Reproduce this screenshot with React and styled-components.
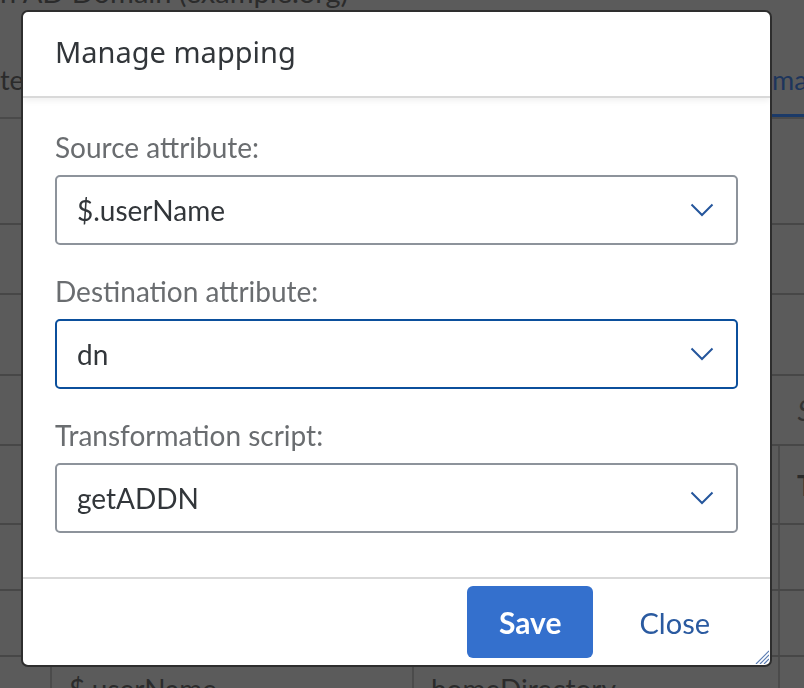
import React from 'react';
import styled, { createGlobalStyle } from 'styled-components';

const GlobalStyle = createGlobalStyle`
  html, body {
    margin: 0;
    padding: 0;
    width: 804px;
    height: 688px;
    overflow: hidden;
    background: #5b5b5b;
    font-family: Lato, "Noto Sans", sans-serif;
  }
  * { box-sizing: border-box; }
`;

/* dimmed page behind the dialog */
const Page = styled.div`
  width: 804px;
  height: 688px;
  overflow: hidden;
  color: #2b2b2b;
`;

const PageTitle = styled.div`
  font-size: 29px;
  line-height: 40px;
  margin-top: -28px;
  white-space: nowrap;
`;

const TabBar = styled.div`
  display: grid;
  grid-template-columns: 772px 1fr;
  height: 107px;
  border-bottom: 2px solid #4a4a4a;
`;

const Tab = styled.div`
  display: flex;
  align-items: center;
  padding-top: 32px;
  font-size: 27px;
  white-space: nowrap;
  overflow: hidden;
  color: ${p => (p.$active ? '#1d355c' : '#2b2b2b')};
  border-bottom: ${p => (p.$active ? '3px solid #1b3a68' : '3px solid transparent')};
`;

const Row = styled.div`
  height: ${p => p.$h}px;
  border-bottom: 2px solid #474747;
  display: flex;
  align-items: center;
  justify-content: flex-end;
`;

const Hint = styled.span`
  font-size: 28px;
  font-style: italic;
  color: #333;
  margin-right: -72px;
`;

const TableRow = styled.div`
  display: grid;
  grid-template-columns: 50px 362px 366px 1fr;
  height: ${p => p.$h}px;
  border-bottom: 2px solid #474747;
`;

const Cell = styled.div`
  display: flex;
  align-items: center;
  padding-left: 17px;
  font-size: 28px;
  white-space: nowrap;
  overflow: hidden;
  border-left: ${p => (p.$first ? 'none' : '2px solid #4b4b4b')};
  font-weight: ${p => (p.$head ? 700 : 400)};
`;

/* dialog */
const Overlay = styled.div`
  position: fixed;
  inset: 0;
  display: flex;
  align-items: flex-start;
  padding: 10px 0 0 21px;
`;

const Dialog = styled.div`
  position: relative;
  width: 751px;
  height: 657px;
  background: #fff;
  border: 2px solid #2e2e2e;
  border-radius: 7px;
  display: flex;
  flex-direction: column;
  overflow: hidden;
`;

const Header = styled.div`
  height: 86px;
  flex-shrink: 0;
  display: flex;
  align-items: center;
  padding: 0 0 6px 32px;
  border-bottom: 2px solid #d9d9d9;
  box-shadow: 0 3px 6px rgba(0, 0, 0, 0.06);
`;

const Title = styled.h1`
  margin: 0;
  font-family: "Noto Sans", Lato, sans-serif;
  font-weight: 400;
  font-size: 29px;
  color: #32363a;
`;

const Content = styled.div`
  flex: 1;
  padding: 31px 32px 0;
  display: flex;
  flex-direction: column;
  gap: 28px;
`;

const Field = styled.div`
  display: flex;
  flex-direction: column;
  gap: 10px;
`;

const Label = styled.label`
  height: 36px;
  line-height: 36px;
  font-size: 28px;
  color: #6a6d70;
`;

const Select = styled.div`
  height: 70px;
  display: flex;
  align-items: center;
  justify-content: space-between;
  padding: 0 22px 0 20px;
  border: 2px solid ${p => (p.$focused ? '#0b4f9c' : '#8d939b')};
  border-radius: 5px;
  font-size: 28px;
  color: #32363a;
`;

const Footer = styled.div`
  height: 88px;
  flex-shrink: 0;
  border-top: 2px solid #d9d9d9;
  display: flex;
  align-items: center;
  justify-content: flex-end;
  gap: 24px;
  padding-right: 38px;
`;

const Button = styled.button`
  height: 72px;
  border: none;
  border-radius: 6px;
  font-family: Lato, "Noto Sans", sans-serif;
  font-size: ${p => (p.$primary ? 30 : 29)}px;
  cursor: pointer;
  padding: ${p => (p.$primary ? '0 32px' : '0 22px')};
  background: ${p => (p.$primary ? '#3470cd' : 'transparent')};
  color: ${p => (p.$primary ? '#fff' : '#2a5aa0')};
  font-weight: ${p => (p.$primary ? 700 : 400)};
`;

const Grip = styled.svg`
  position: absolute;
  right: 1px;
  bottom: 1px;
`;

const Chevron = () => (
  <svg width="24" height="14" viewBox="0 0 24 14">
    <polyline points="1.5,1.5 12,12 22.5,1.5" fill="none" stroke="#25569c" strokeWidth="2" />
  </svg>
);

const fields = [
  { label: 'Source attribute:', value: '$.userName' },
  { label: 'Destination attribute:', value: 'dn', focused: true },
  { label: 'Transformation script:', value: 'getADDN' },
];

export default function App() {
  return (
    <>
      <GlobalStyle />
      <Page>
        <PageTitle>n AD Domain (example.org)</PageTitle>
        <TabBar>
          <Tab>te</Tab>
          <Tab $active>mapping</Tab>
        </TabBar>
        <Row $h={106} />
        <Row $h={70} />
        <Row $h={81} />
        <Row $h={70}>
          <Hint>Search</Hint>
        </Row>
        <TableRow $h={79}>
          <Cell $first $head />
          <Cell $head />
          <Cell $head />
          <Cell $head>Type</Cell>
        </TableRow>
        <TableRow $h={66}>
          <Cell $first /><Cell /><Cell /><Cell />
        </TableRow>
        <TableRow $h={66}>
          <Cell $first /><Cell /><Cell /><Cell />
        </TableRow>
        <TableRow $h={66}>
          <Cell $first />
          <Cell>$.userName</Cell>
          <Cell>homeDirectory</Cell>
          <Cell />
        </TableRow>
      </Page>

      <Overlay>
        <Dialog role="dialog">
          <Header>
            <Title>Manage mapping</Title>
          </Header>
          <Content>
            {fields.map(f => (
              <Field key={f.label}>
                <Label>{f.label}</Label>
                <Select $focused={f.focused}>
                  <span>{f.value}</span>
                  <Chevron />
                </Select>
              </Field>
            ))}
          </Content>
          <Footer>
            <Button $primary>Save</Button>
            <Button>Close</Button>
          </Footer>
          <Grip width="16" height="16" viewBox="0 0 16 16">
            <g stroke="#5b7db3" strokeWidth="1.2">
              <line x1="16" y1="3" x2="3" y2="16" />
              <line x1="16" y1="7" x2="7" y2="16" />
              <line x1="16" y1="11" x2="11" y2="16" />
            </g>
          </Grip>
        </Dialog>
      </Overlay>
    </>
  );
}
